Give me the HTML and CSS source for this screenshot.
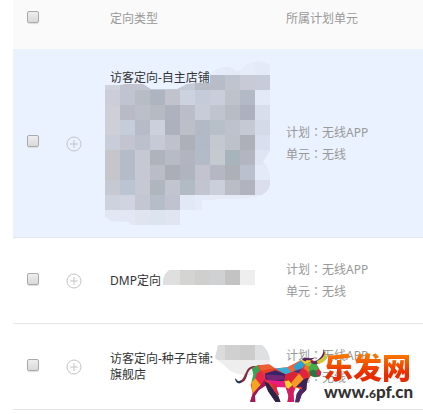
FILE: index.html
```html
<!DOCTYPE html>
<html lang="zh-CN">
<head>
<meta charset="utf-8">
<title>定向列表</title>
<link rel="stylesheet" href="styles.css">
</head>
<body>
<main class="page">
<table class="targets">
  <colgroup><col class="col-check"><col class="col-add"><col class="col-name"><col></colgroup>
  <thead>
    <tr>
      <th class="check"><input type="checkbox" aria-label="全选"></th>
      <th></th>
      <th class="name">定向类型</th>
      <th class="plan">所属计划单元</th>
    </tr>
  </thead>
  <tbody>
    <tr class="active">
      <td class="check"><input type="checkbox" aria-label="访客定向-自主店铺"></td>
      <td class="add"><button type="button" aria-label="展开"><svg viewBox="0 0 16 16"><circle cx="8" cy="8" r="7"/><path d="M4 8h8M8 4v8"/></svg></button></td>
      <td class="name"><div class="tall">访客定向-自主店铺</div>
        <svg class="mosaic mosaic-large" viewBox="0 0 165 165" aria-hidden="true">
          <clipPath id="smudge"><path d="M0 25H15L20 24H38L46 29H72L82 24L90 23H105V15Q118 0 133 12Q149-5 165 5V91L162 96L158 102L163 108Q165 112 165 118V125Q163 134 153 136Q145 139 118 139H112V140H97V150H75V165H26L24 162L6 161L0 157Z"/></clipPath>
          <g id="cells" clip-path="url(#smudge)" shape-rendering="crispEdges"></g>
        </svg></td>
      <td class="plan"><p>计划<span class="colon" lang="zh-TW">：</span>无线APP</p><p>单元<span class="colon" lang="zh-TW">：</span>无线</p></td>
    </tr>
    <tr>
      <td class="check"><input type="checkbox" aria-label="DMP定向"></td>
      <td class="add"><button type="button" aria-label="展开"><svg viewBox="0 0 16 16"><circle cx="8" cy="8" r="7"/><path d="M4 8h8M8 4v8"/></svg></button></td>
      <td class="name">DMP定向
        <svg class="mosaic mosaic-strip" viewBox="0 0 92 15" aria-hidden="true">
          <clipPath id="strip"><path d="M0 15V9L2 4L6 0H92V15Z"/></clipPath>
          <g clip-path="url(#strip)" shape-rendering="crispEdges"><path fill="#dfdfdf" d="M0 0h17v15H0z"/><path fill="#d4d4d2" d="M17 0h15v15H17z"/><path fill="#cfcfcd" d="M32 0h15v15H32z"/><path fill="#d0d1d2" d="M47 0h15v15H47z"/><path fill="#c3c3c3" d="M62 0h15v15H62z"/><path fill="#eee" d="M77 0h15v15H77z"/></g>
        </svg></td>
      <td class="plan"><p>计划<span class="colon" lang="zh-TW">：</span>无线APP</p><p>单元<span class="colon" lang="zh-TW">：</span>无线</p></td>
    </tr>
    <tr>
      <td class="check"><input type="checkbox" aria-label="访客定向-种子店铺"></td>
      <td class="add"><button type="button" aria-label="展开"><svg viewBox="0 0 16 16"><circle cx="8" cy="8" r="7"/><path d="M4 8h8M8 4v8"/></svg></button></td>
      <td class="name">访客定向-种子店铺:<br>旗舰店
        <svg class="mosaic mosaic-oval" viewBox="0 0 55 30" aria-hidden="true">
          <clipPath id="oval"><path d="M3 0H47Q55 6 55 17Q52 30 36 30Q18 31 10 21L0 13Z"/></clipPath>
          <g clip-path="url(#oval)" shape-rendering="crispEdges"><path fill="#eeeeef" d="M0 0h55v30H0z"/><path fill="#dcdcdc" d="M0 0h10v15H0z"/><path fill="#d0d0d0" d="M10 0h15v15H10z"/><path fill="#cccccd" d="M25 0h15v15H25z"/><path fill="#dfe0e2" d="M40 0h15v15H40z"/></g>
        </svg></td>
      <td class="plan"><p>计划<span class="colon" lang="zh-TW">：</span>无线APP</p><p>单元<span class="colon" lang="zh-TW">：</span>无线</p></td>
    </tr>
  </tbody>
</table>
<div class="watermark">
  <svg class="bull" viewBox="24 36 284 172" aria-hidden="true">
    <path d="M94 94Q76 90 66 104L57 122Q51 138 38 140L29 130Q31 148 46 145Q60 140 64 125Q70 101 82 100L89 103Z" fill="#872a40"/>
    <path d="M29 130Q31 148 46 145L49 137L38 139Z" fill="#173e59"/>
    <path d="M80 99L98 91L132 89L150 101L187 97L227 77L250 68L270 80L289 112L285 124L270 127L257 123L246 143L244 165L230 180L222 203H210L215 177L225 163L212 158L205 176L207 202H187L190 184L182 157L154 157L157 178L166 202H151L129 170L120 151L101 166L89 183L90 202H74L82 177L76 149L88 125Z" fill="#e33d29"/>
    <path d="M80 99L98 91L104 108L89 131L78 143L84 119Z" fill="#37a354"/>
    <path d="M98 91L132 89L150 101L107 108Z" fill="#ee5d30"/>
    <path d="M94 116L107 108L119 131L103 150L90 137Z" fill="#ed2449"/>
    <path d="M78 143L90 130L106 151L92 166L82 177Z" fill="#f6a522"/>
    <path d="M106 151L117 134L129 148L101 166L89 183L90 202H74L82 177Z" fill="#a2185c"/>
    <path d="M107 108L150 101L164 106L119 119Z" fill="#eb3f29"/>
    <path d="M119 116L151 106L183 119L177 138L142 143L121 134Z" fill="#362468"/>
    <path d="M119 119L177 122L178 134L128 137Z" fill="#752675"/>
    <path d="M150 101L187 97L204 111L183 119Z" fill="#35afd8"/>
    <path d="M180 119L205 110L218 119L198 145L178 139Z" fill="#dc2335"/>
    <path d="M121 135L178 139L185 158L154 157Z" fill="#e91d80"/>
    <path d="M118 142L129 145L145 166L157 178L166 202H151L129 170Z" fill="#292449"/>
    <path d="M142 147L158 150L154 160L162 180L157 183L144 166Z" fill="#dd283f"/>
    <path d="M178 139L197 144L208 163L205 176L207 202H187L190 184L182 157Z" fill="#d31b61"/>
    <path d="M178 139L191 137L202 151L190 162L182 157Z" fill="#f3d331"/>
    <path d="M187 97L227 77L211 106L198 112Z" fill="#f46435"/>
    <path d="M205 94L227 77L240 88L231 101L211 107Z" fill="#27a2d3"/>
    <path d="M205 110L231 101L222 116Z" fill="#373887"/>
    <path d="M218 119L231 101L246 107L251 128L236 133Z" fill="#e2233b"/>
    <path d="M198 145L222 116L236 133L213 157L206 158Z" fill="#f79928"/>
    <path d="M213 157L236 133L250 128L246 143L244 165L235 175L229 156Z" fill="#372357"/>
    <path d="M215 177L225 163L239 164L230 180L222 203H210Z" fill="#49286b"/>
    <path d="M227 77L250 68L260 80L240 88Z" fill="#f3ce35"/>
    <path d="M240 88L260 80L251 113L237 101Z" fill="#f47027"/>
    <path d="M251 87L270 80L281 102L265 117L253 109Z" fill="#40ae49"/>
    <path d="M253 109L265 105L289 112L285 124L270 127L257 123Z" fill="#257744"/>
    <path d="M278 104L289 112L285 124L273 118Z" fill="#d82451"/>
    <path d="M243 86L263 82L254 94L242 92Z" fill="#98c83b"/>
    <path d="M255 76Q272 84 286 68Q296 57 296 42Q308 65 290 82Q277 92 260 86Z" fill="#5e2865"/>
    <path d="M276 78Q304 67 299 43Q312 67 294 82L278 88Z" fill="#d4c730"/>
    <path d="M242 80Q224 75 238 68L256 70L272 68Q257 79 245 75Z" fill="#54255f"/>
  </svg>
  <div class="brand">
    <span class="brand-name">乐发网</span>
    <span class="brand-url">www.<small>6</small>pf.cn</span>
  </div>
</div>
</main>
<script src="mosaic.js"></script>
</body>
</html>
```

FILE: styles.css
```css
* { box-sizing: border-box; }
body { margin: 0; background: #fff; color: #333; font: 12px/16px "Noto Sans", "Noto Sans CJK SC", sans-serif; }
p { margin: 0; }
.page { position: relative; padding-left: 13px; overflow: hidden; }
.targets { width: 100%; table-layout: fixed; border-collapse: separate; border-spacing: 0; }
.col-check { width: 40px; }
.col-add { width: 42px; }
.col-name { width: 176px; }
th { padding: 11px 0 22px; background: #fafafa; color: #999; font-weight: 400; text-align: left; line-height: 16px; }
td { padding: 21px 0 20px; border-bottom: 1px solid #e6e6e6; }
.active td { background: #ebf2ff; }
th.name, td.name, th.plan, td.plan { padding-left: 15px; }
td.name { position: relative; }
.tall { min-height: 147px; }
td.plan { color: #999; line-height: 22px; }
.colon { font-family: "Noto Sans CJK TC", sans-serif; line-height: 16px; }
.check { text-align: center; }
th.check { padding: 8px 0 24px; }
td.check { padding: 16px 0 20px; }
.check input {
  appearance: none; display: block; width: 12px; height: 12px; margin: 0 auto;
  border: 1px solid #aaa; border-radius: 2px;
  background: linear-gradient(#eee, #d9d9d9);
  box-shadow: 0 1px 1px #ddd;
}
.add { text-align: center; }
.add button { display: block; width: 16px; height: 16px; margin: 0 auto; padding: 0; border: 0; background: none; }
.add svg { display: block; width: 16px; height: 16px; fill: none; stroke: #c4c4c4; stroke-width: 1; }
.mosaic { position: absolute; display: block; }
.mosaic-large { left: 10px; top: 11px; width: 165px; height: 165px; }
.mosaic-strip { left: 68px; top: 32px; width: 92px; height: 15px; }
.mosaic-oval { left: 120px; top: 21px; width: 55px; height: 30px; }
.watermark { position: absolute; left: 233px; bottom: 6px; display: flex; align-items: flex-end; }
.bull { display: block; width: 95px; height: 57px; }
.brand { display: flex; flex-direction: column; margin-left: -4px; }
.brand-name {
  font: 900 29px/32px "Noto Sans CJK SC", sans-serif;
  background: linear-gradient(#ff8a00, #e92b00 75%);
  -webkit-background-clip: text; background-clip: text; color: transparent;
}
.brand-url { color: #333; font: 900 17px/20px Lato, sans-serif; }
.brand-url small { font-size: 12px; }
```

FILE: mosaic.js
```js
const rows = [
  "e5ebf7 e5ebf7 e5ebf7 e5ebf7 e5ebf7 e5ebf7 e5ebf7 e5ebf7 e3e9f5 e6ecf8 e4eaf6",
  "d0d3de c1c4d0 c1c4d0 c3c9d5 c3c9d5 c5cbd6 b8bdc5 b8bcc8 bfc4cf c8cad5 c8ccd9",
  "cccdd8 c0c3d0 b8bcc4 aeb5c1 c2c2cc ccd3df c5cbd9 cacdda bec2cb b2bac5 e4e9f8",
  "cfcfd8 b8bbc6 bbbfca b6bac3 aeb2be bbbec8 c8ccd9 c0c4cf b8bcc4 adb1bd d8deec",
  "cfcfd8 c4cdd9 b6bbc7 ccd0dc adb1bd bcbfc7 b4bac5 b7bfc9 bec2cd c5c9d3 d4dae8",
  "c9ccd9 c2c4d0 bcc0cd c6cad6 bfc2cd adb0b8 b3bac7 c4c8d1 bcc1ca adb0b9 d9dfee",
  "c5c5ca b4bcca c6c9d3 afb3bc b7bbc5 b2b5bf b4bbc8 c5c9d0 a8b4bc b3b6c0 dfe5f3",
  "c5c5ca b4bcca c6c9d3 babdc7 abadb7 b0b4be c2c3cf b5b7c2 adb0b7 b9c1ce e4eaf8",
  "c7c9d2 bbc4d2 c6c9d3 b0b6be c2c5cf b2bac4 c2c4d0 cbcfdb babdc6 b1b4bf dbdfeb",
  "ced2df d0d4e0 c4c7d1 b4bdc8 c0c3cf e2e8f6 e5ebf8 e5eaf6 e5eaf6 e5eaf6 e5eaf6",
  "e3e7f3 e2e7f3 e0e4ef dce4ef e1e5f2 ebf2ff ebf2ff ebf2ff ebf2ff ebf2ff ebf2ff"
];
const cells = document.getElementById("cells");
rows.forEach((row, y) => row.split(" ").forEach((color, x) => {
  const cell = document.createElementNS("http://www.w3.org/2000/svg", "rect");
  cell.setAttribute("x", x * 15);
  cell.setAttribute("y", y * 15);
  cell.setAttribute("width", 15);
  cell.setAttribute("height", 15);
  cell.setAttribute("fill", "#" + color);
  cells.append(cell);
}));
```
